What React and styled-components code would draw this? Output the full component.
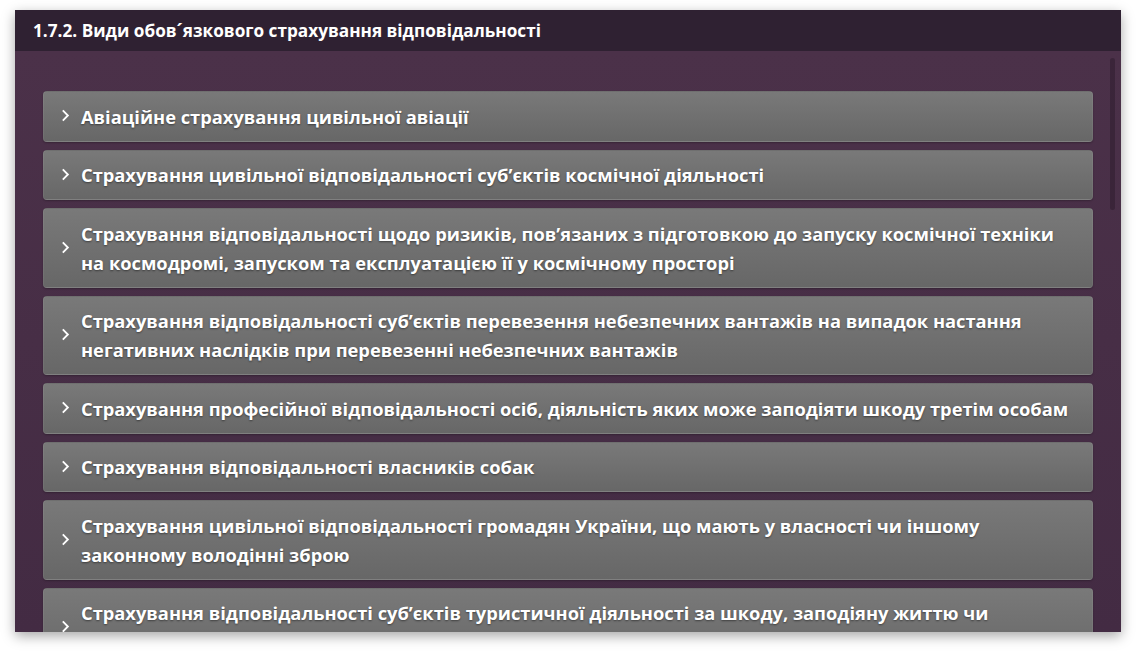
import React from "react";
import styled, { createGlobalStyle } from "styled-components";

const items = [
  "Авіаційне страхування цивільної авіації",
  "Страхування цивільної відповідальності суб’єктів космічної діяльності",
  "Страхування відповідальності щодо ризиків, пов’язаних з підготовкою до запуску космічної техніки на космодромі, запуском та експлуатацією її у космічному просторі",
  "Страхування відповідальності суб’єктів перевезення небезпечних вантажів на випадок настання негативних наслідків при перевезенні небезпечних вантажів",
  "Страхування професійної відповідальності осіб, діяльність яких може заподіяти шкоду третім особам",
  "Страхування відповідальності власників собак",
  "Страхування цивільної відповідальності громадян України, що мають у власності чи іншому законному володінні зброю",
  "Страхування відповідальності суб’єктів туристичної діяльності за шкоду, заподіяну життю чи здоров’ю туриста або його майну",
  "Страхування цивільно-правової відповідальності власників наземних транспортних засобів",
];

export default function App() {
  return (
    <>
      <GlobalStyle />
      <Page>
        <Panel>
          <Header>1.7.2. Види обов´язкового страхування відповідальності</Header>
          <Body>
            <List>
              {items.map((text) => (
                <Item key={text}>
                  <Chevron viewBox="0 0 8 12">
                    <path d="M1.5 1.2 L6.2 6 L1.5 10.8" />
                  </Chevron>
                  <Label>{text}</Label>
                </Item>
              ))}
            </List>
            <Thumb />
          </Body>
        </Panel>
      </Page>
    </>
  );
}

const GlobalStyle = createGlobalStyle`
  html, body {
    margin: 0;
    padding: 0;
    background: #ffffff;
  }
`;

const Page = styled.div`
  width: 1136px;
  height: 653px;
  padding: 10px 15px 21px 15px;
  box-sizing: border-box;
  font-family: "Open Sans", "Noto Sans", sans-serif;
`;

const Panel = styled.div`
  width: 1106px;
  height: 622px;
  display: flex;
  flex-direction: column;
  box-shadow: 0 4px 12px rgba(0, 0, 0, 0.35);
  overflow: hidden;
`;

const Header = styled.div`
  flex: 0 0 41px;
  display: flex;
  align-items: center;
  padding-left: 18px;
  background: #2f2132;
  color: #ffffff;
  font-size: 17.2px;
  font-weight: 700;
`;

const Body = styled.div`
  position: relative;
  flex: 1;
  overflow: hidden;
  background: linear-gradient(180deg, #4b3149 0%, #432b43 100%);
`;

const List = styled.div`
  display: flex;
  flex-direction: column;
  gap: 8px;
  padding: 40px 28px 0 28px;
`;

const Item = styled.div`
  position: relative;
  display: flex;
  align-items: center;
  padding: 9.5px 20px 10px 37px;
  border: 1px solid rgba(255, 255, 255, 0.06);
  border-radius: 4px;
  background: linear-gradient(180deg, #797979 0%, #676767 100%);
  box-shadow: 0 1px 2px rgba(0, 0, 0, 0.25);
`;

const Chevron = styled.svg`
  position: absolute;
  left: 17px;
  top: 50%;
  width: 9px;
  height: 13px;
  margin-top: -7px;
  fill: none;
  stroke: #ffffff;
  stroke-width: 1.7;
`;

const Label = styled.span`
  color: #ffffff;
  font-size: 18.3px;
  font-weight: 700;
  line-height: 29px;
  text-shadow: 0 1px 2px rgba(0, 0, 0, 0.45);
`;

const Thumb = styled.div`
  position: absolute;
  top: 7px;
  right: 6px;
  width: 5px;
  height: 152px;
  border-radius: 3px;
  background: rgba(40, 25, 40, 0.45);
`;
